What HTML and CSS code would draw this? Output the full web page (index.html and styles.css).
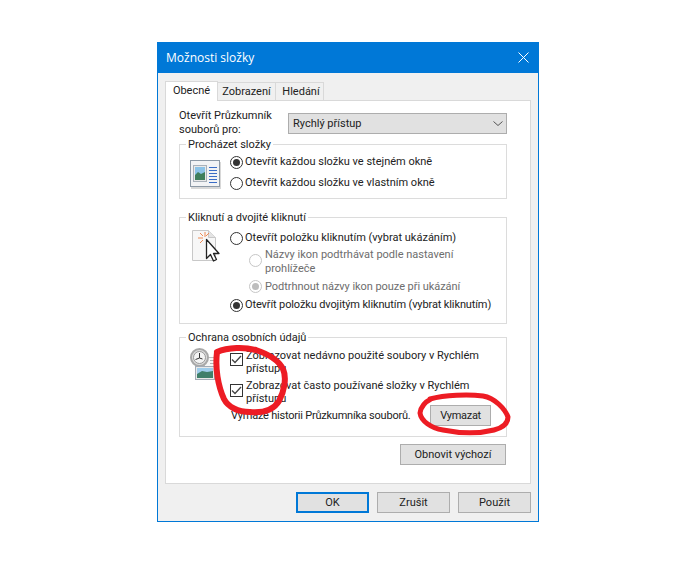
FILE: index.html
```html
<!DOCTYPE html>
<html lang="cs">
<head>
<meta charset="utf-8">
<title>Možnosti složky</title>
<link rel="stylesheet" href="styles.css">
</head>
<body>
<div class="window">
  <div class="titlebar">
    <span class="title">Možnosti složky</span>
    <svg class="close" width="11" height="11" viewBox="0 0 11 11"><path d="M.5.5l10 10M10.500.5l-10 10" stroke="#fff" fill="none"/></svg>
  </div>
  <div class="client">
    <div class="tabs">
      <div class="tab tab-active">Obecné</div>
      <div class="tab tab-2">Zobrazení</div>
      <div class="tab tab-3">Hledání</div>
    </div>
    <div class="panel">
      <div class="open-row">
        <div class="open-label">Otevřít Průzkumník souborů pro:</div>
        <div class="select"><span>Rychlý přístup</span>
          <svg width="10" height="5" viewBox="0 0 10 5"><path d="M.5.5l4.500 4 4.500-4" stroke="#555" fill="none"/></svg>
        </div>
      </div>

      <div class="group group-browse">
        <div class="legend">Procházet složky</div>
        <svg class="gicon icon-browse" width="31" height="29" viewBox="0 0 31 29">
          <rect x="1" y="2" width="30" height="27" fill="#d8d8d8"/>
          <rect x=".5" y=".5" width="29" height="26" fill="#f2f3f5" stroke="#8d99a6"/>
          <rect x="3.500" y="5.500" width="13" height="16" fill="#e9e9e9" stroke="#a9b1ba"/>
          <rect x="5" y="7" width="10" height="13" fill="#8cc3e8"/>
          <path d="M5 15l3-3 3 2 4-2v8H5z" fill="#3f7f5c"/>
          <path d="M19 7.500h8M19 10.500h8M19 13.500h8M19 16.500h8M19 19.500h8M19 22.500h8" stroke="#3a6cc6"/>
        </svg>
        <div class="options">
          <div class="opt"><span class="radio on"></span>Otevřít každou složku ve stejném okně</div>
          <div class="opt opt-gap"><span class="radio"></span>Otevřít každou složku ve vlastním okně</div>
        </div>
      </div>

      <div class="group group-click">
        <div class="legend">Kliknutí a dvojité kliknutí</div>
        <svg class="gicon icon-click" width="28" height="33" viewBox="0 0 28 33">
          <path d="M.5.500h16l7 7v23H.5z" fill="#f7f7f7" stroke="#c8c8c8"/>
          <path d="M16.500.5v7h7" fill="#e4e4e4" stroke="#c8c8c8"/>
          <path d="M13 2v5M6 8h5M8 3l3 3M8 13l3-3M17 3l-3 3" stroke="#ee8a55"/>
          <path d="M14.500 9.500v19l4-4 3 6.500 3-1.500-3-6h5.500z" fill="#fff" stroke="#222" stroke-width="1.300" stroke-linejoin="round"/>
        </svg>
        <div class="options">
          <div class="opt"><span class="radio"></span>Otevřít položku kliknutím (vybrat ukázáním)</div>
          <div class="sub sub-first"><span class="radio dim"></span><span>Názvy ikon podtrhávat podle nastavení prohlížeče</span></div>
          <div class="sub sub-second"><span class="radio dim on-dim"></span><span>Podtrhnout názvy ikon pouze při ukázání</span></div>
          <div class="opt opt-last"><span class="radio on"></span>Otevřít položku dvojitým kliknutím (vybrat kliknutím)</div>
        </div>
      </div>

      <div class="group group-privacy">
        <div class="legend">Ochrana osobních údajů</div>
        <svg class="gicon icon-privacy" width="32" height="33" viewBox="0 0 32 33">
          <rect x="14.500" y="9.500" width="13" height="16" fill="#f7f7f7" stroke="#bdbdbd"/>
          <path d="M20 12.500h6M20 15.500h6M20 18.500h6" stroke="#b4b4b4"/>
          <circle cx="9.500" cy="9.500" r="8.500" fill="#dedede" stroke="#a8a8a8" stroke-width="2"/>
          <circle cx="9.500" cy="9.500" r="6" fill="#f4f4f4" stroke="#999"/>
          <path d="M9.500 5v5l-4 1.500M9.500 10l3 1" stroke="#333" fill="none"/>
          <rect x="5.500" y="18.500" width="19" height="13" fill="#e9e9e9" stroke="#a4acb6"/>
          <rect x="7" y="20" width="16" height="10" fill="#9fcdec"/>
          <path d="M7 26l5-3 5 1 6-1v7H7z" fill="#3f7f6a"/>
        </svg>
        <div class="options">
          <div class="check-row"><span class="check"><svg width="11" height="9" viewBox="0 0 11 9"><path d="M1 4.500l3 3 6-6.500" stroke="#444" stroke-width="1.300" fill="none"/></svg></span><span>Zobrazovat nedávno použité soubory v Rychlém přístupu</span></div>
          <div class="check-row check-second"><span class="check"><svg width="11" height="9" viewBox="0 0 11 9"><path d="M1 4.500l3 3 6-6.500" stroke="#444" stroke-width="1.300" fill="none"/></svg></span><span>Zobrazovat často používané složky v Rychlém přístupu</span></div>
          <div class="clear-row"><span class="clear-text">Vymaže historii Průzkumníka souborů.</span><div class="btn btn-clear">Vymazat</div></div>
        </div>
      </div>

      <div class="restore-row"><div class="btn btn-restore">Obnovit výchozí</div></div>
    </div>
    <div class="footer">
      <div class="btn btn-foot btn-default">OK</div>
      <div class="btn btn-foot">Zrušit</div>
      <div class="btn btn-foot">Použít</div>
    </div>
  </div>
</div>
<svg class="scribbles" width="696" height="564" viewBox="0 0 696 564">
  <path class="s1" d="M217 352C228 347 245 347 256 350C268 354 279 361 283 369C287 378 284 392 279 401C273 411 262 413 250 412C238 412 228 407 224 399C218 386 215 368 217 352"/>
  <path class="s2" d="M430 399C445 395 468 394 483 396C495 398 505 409 508 417C508 424 502 428 494 430C478 434 458 433 443 430C431 428 421 421 420 413C421 406 425 402 431 399"/>
</svg>
</body>
</html>
```
FILE: styles.css
```css
* { box-sizing: border-box; }
html, body { margin: 0; padding: 0; }
body {
  width: 696px;
  height: 564px;
  background: #fff;
  padding: 42px 0 0 157px;
  position: relative;
  overflow: hidden;
  font-family: Roboto, "Open Sans", sans-serif;
  font-size: 11px;
  line-height: 14px;
  color: #222;
}
.window {
  width: 382px;
  height: 480px;
  border: 1px solid #0078d7;
  background: #f0f0f0;
  display: flex;
  flex-direction: column;
}
.titlebar {
  height: 30px;
  flex: none;
  background: #0078d7;
  color: #fff;
  display: flex;
  align-items: center;
  justify-content: space-between;
  padding: 0 9px 0 8px;
  font-family: "Open Sans", sans-serif;
  font-size: 12px;
}
.close { margin-top: -2px; }
.client { flex: 1; padding: 7px 7px 0; display: flex; flex-direction: column; }
.tabs { display: flex; align-items: flex-end; height: 20px; position: relative; z-index: 1; flex: none; }
.tab {
  height: 18px;
  border: 1px solid #d9d9d9;
  border-bottom: 0;
  border-left: 0;
  background: #f0f0f0;
  display: flex;
  align-items: center;
  justify-content: center;
}
.tab-active { width: 53px; height: 20px; margin-bottom: -1px; background: #fff; border-left: 1px solid #d9d9d9; padding-bottom: 1px; }
.tab-2 { width: 58px; }
.tab-3 { width: 48px; padding-left: 3px; }
.panel {
  width: 366px;
  height: 384px;
  flex: none;
  background: #fff;
  border: 1px solid #d9d9d9;
  padding: 8px 22px 0 13px;
}
.open-row { display: flex; height: 35px; }
.open-label { width: 109px; }
.select {
  width: 219px;
  height: 21px;
  margin-top: 4px;
  border: 1px solid #adadad;
  background: #e1e1e1;
  display: flex;
  align-items: center;
  justify-content: space-between;
  padding: 0 3px 0 4px;
}
.group {
  position: relative;
  width: 328px;
  border: 1px solid #dcdcdc;
  display: flex;
}
.legend {
  position: absolute;
  top: -7px;
  left: 6px;
  background: #fff;
  padding: 0 2px;
}
.group-browse { height: 55px; padding: 10px 0 0 10px; }
.group-click { height: 107px; margin-top: 18px; padding: 13px 0 0 12px; }
.group-privacy { height: 100px; margin-top: 13px; padding: 11px 0 0 10px; }
.gicon { flex: none; }
.icon-browse { margin-top: 5px; margin-right: 9px; }
.icon-click { margin-top: -1px; margin-right: 10px; }
.icon-privacy { margin-top: -1px; margin-right: 8px; }
.opt { display: flex; align-items: center; height: 14px; white-space: nowrap; }
.opt-gap { margin-top: 7px; }
.opt-last { margin-top: 4px; letter-spacing: -.12px; }
.radio {
  flex: none;
  width: 13px;
  height: 13px;
  border: 1px solid #333;
  border-radius: 50%;
  background: #fff;
  margin-right: 2px;
  position: relative;
}
.radio.on::after, .radio.on-dim::after {
  content: "";
  position: absolute;
  inset: 2px;
  border-radius: 50%;
  background: #333;
}
.radio.dim { border-color: #c6c6c6; margin-right: 3px; }
.radio.on-dim::after { background: #bdbdbd; }
.sub { display: flex; margin-left: 19px; width: 230px; color: #6d6d6d; align-items: flex-start; }
.sub-first { margin-top: 3px; }
.sub-first .radio { margin-top: 6px; }
.sub-second { margin-top: 4px; white-space: nowrap; letter-spacing: -.05px; }
.sub-second .radio { margin-top: 0; }
.check-row { display: flex; width: 250px; align-items: flex-start; line-height: 13px; }
.check-second { margin-top: 4px; }
.check {
  flex: none;
  width: 13px;
  height: 13px;
  margin-top: 4px;
  margin-right: 3px;
  border: 1px solid #333;
  background: #fff;
  display: flex;
  align-items: center;
  justify-content: center;
}
.check-second .check { margin-top: 5px; }
.clear-row { display: flex; margin-left: 1px; align-items: center; justify-content: space-between; width: 260px; }
.clear-text { letter-spacing: -.22px; }
.btn {
  height: 21px;
  border: 1px solid #adadad;
  background: #e1e1e1;
  display: flex;
  align-items: center;
  justify-content: center;
}
.btn-clear { width: 61px; letter-spacing: -.3px; }
.restore-row { display: flex; justify-content: flex-end; width: 327px; margin-top: 7px; }
.btn-restore { width: 106px; }
.footer { display: flex; justify-content: flex-end; gap: 8px; margin-top: 8px; }
.btn-foot { width: 73px; }
.btn-default { border: 2px solid #0078d7; }
.scribbles { position: absolute; left: 0; top: 0; pointer-events: none; }
.scribbles path { fill: none; stroke: #ed1c24; stroke-linecap: round; stroke-linejoin: round; }
.s1 { stroke-width: 6; }
.s2 { stroke-width: 5; }
```
